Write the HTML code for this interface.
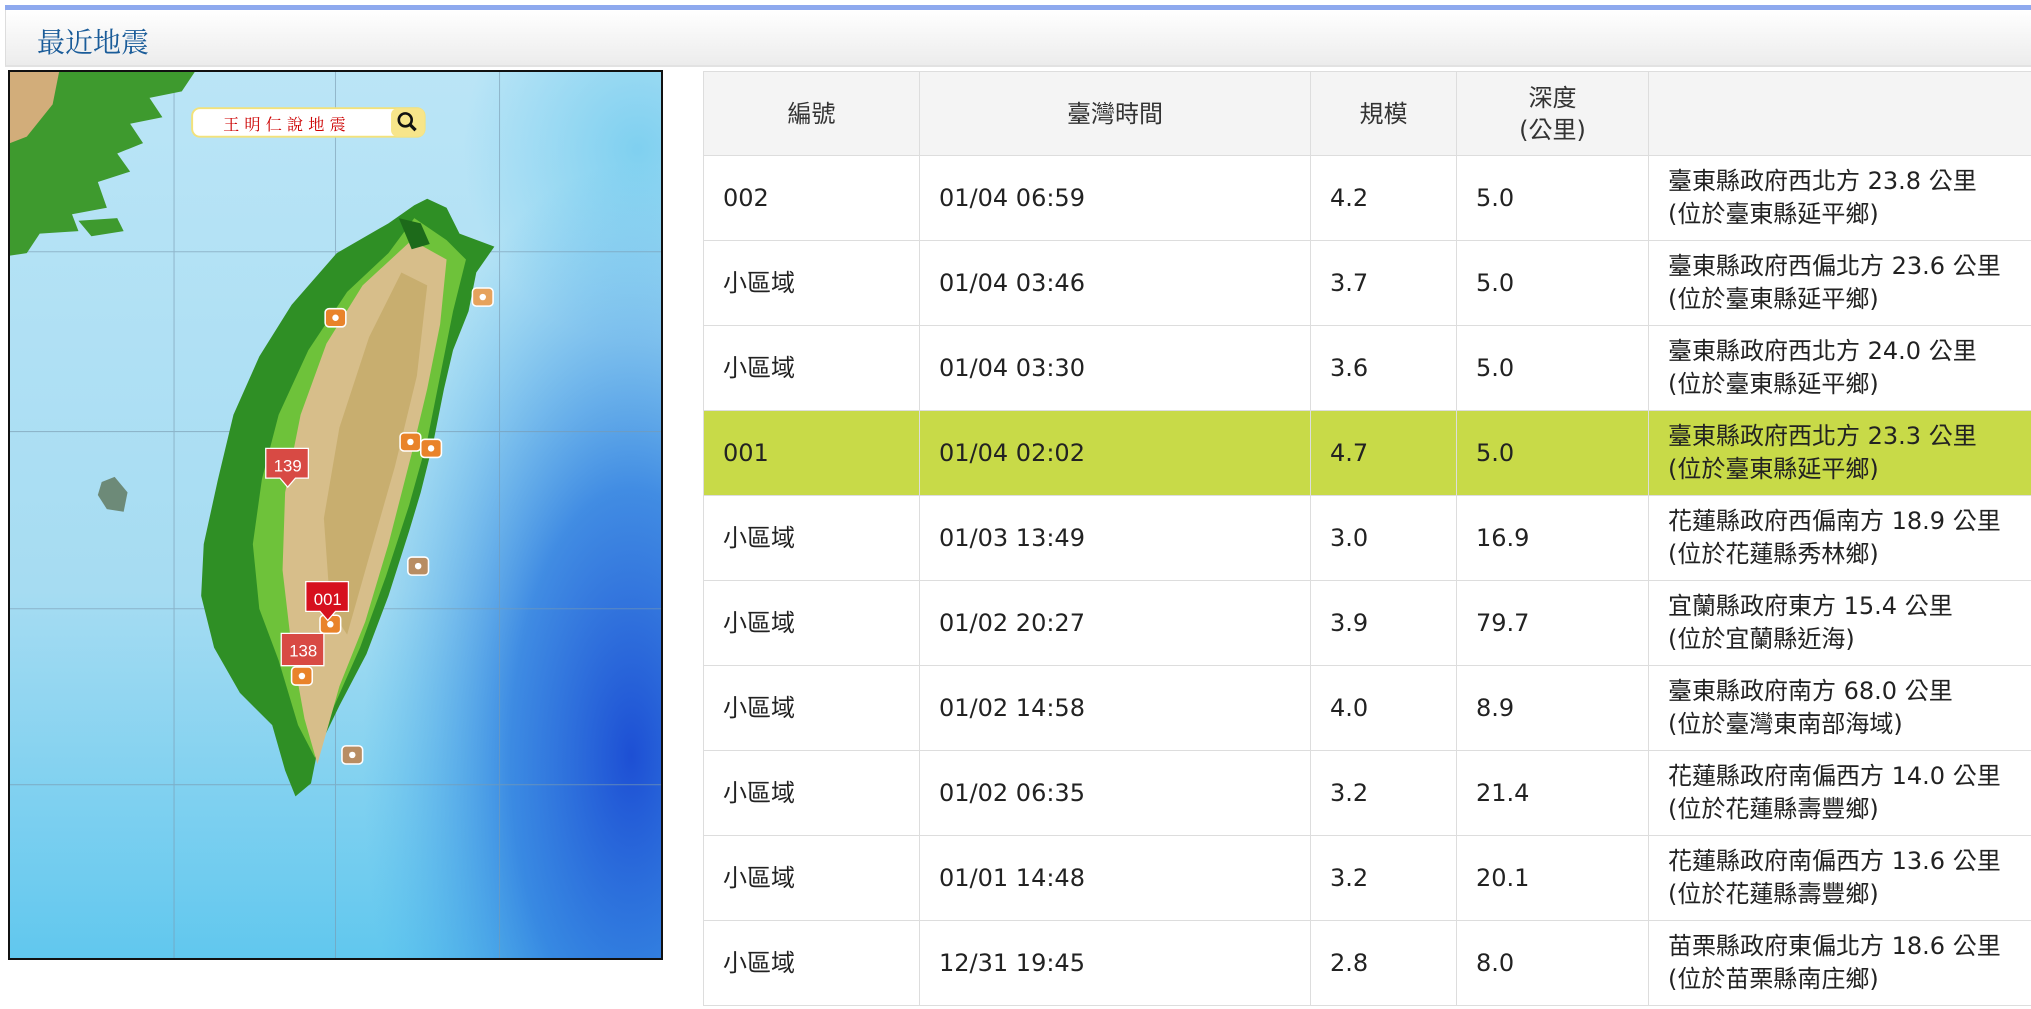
<!DOCTYPE html>
<html><head><meta charset="utf-8"><style>
html,body{margin:0;padding:0;background:#fff;width:2031px;height:1009px;overflow:hidden;font-family:"DejaVu Sans","Noto Sans CJK TC",sans-serif;}
.topbar{position:absolute;left:5px;top:5px;width:2026px;height:5px;background:#8ea9ee;}
.head{position:absolute;left:5px;top:10px;width:2026px;height:55px;background:linear-gradient(#fff,#ececec);border-bottom:2px solid #e2e2e2;border-left:1px solid #ddd;}
.head span{position:absolute;left:31px;top:11px;font-family:"Liberation Serif","Noto Serif CJK SC",serif;font-size:28px;color:#1a5c99;}
.map{position:absolute;left:8px;top:70px;width:655px;height:890px;border:2px solid #111;box-sizing:border-box;overflow:hidden;}
table{position:absolute;left:703px;top:71px;border-collapse:collapse;font-size:24px;color:#222;table-layout:fixed;width:1500px;}
td,th{border:1px solid #ddd;box-sizing:border-box;padding:0 0 0 19px;text-align:left;font-weight:normal;white-space:nowrap;overflow:hidden;}
th{background:#f4f4f4;height:84px;text-align:center;padding:0;color:#333;line-height:32px;}
td{height:85px;line-height:33px;}
tr.hl td{background:#c8da48;}
</style></head><body>
<div class="topbar"></div>
<div class="head"><span>最近地震</span></div>
<div class="map">
<svg width="651" height="886" viewBox="7 55 504 685" preserveAspectRatio="none" xmlns="http://www.w3.org/2000/svg">
<defs>
<linearGradient id="sea" x1="0" y1="0" x2="0" y2="1">
<stop offset="0" stop-color="#bde6f7"/><stop offset="0.6" stop-color="#a6dcf2"/><stop offset="1" stop-color="#5cc6ee"/></linearGradient>
<radialGradient id="deep" cx="0.9" cy="0.75" r="0.65"><stop offset="0" stop-color="#1d4fd4"/><stop offset="0.45" stop-color="#2f7ee0" stop-opacity="0.85"/><stop offset="1" stop-color="#4fb3ea" stop-opacity="0"/></radialGradient>
<radialGradient id="ne" cx="0.9" cy="0.2" r="0.5"><stop offset="0" stop-color="#7fd0f0"/><stop offset="1" stop-color="#7fd0f0" stop-opacity="0"/></radialGradient>
</defs>
<rect x="0" y="0" width="520" height="760" fill="url(#sea)"/>
<rect x="250" y="55" width="270" height="300" fill="url(#ne)"/>
<rect x="200" y="55" width="320" height="705" fill="url(#deep)"/>
<g stroke="#7a9ab0" stroke-width="0.8" opacity="0.6">
<line x1="134" y1="55" x2="134" y2="740"/><line x1="259" y1="55" x2="259" y2="740"/><line x1="386" y1="55" x2="386" y2="740"/>
<line x1="7" y1="194" x2="511" y2="194"/><line x1="7" y1="333" x2="511" y2="333"/><line x1="7" y1="470" x2="511" y2="470"/><line x1="7" y1="606" x2="511" y2="606"/></g>
<path d="M7 55 L150 55 L140 70 L115 75 L125 90 L100 95 L110 110 L90 118 L100 132 L75 140 L82 160 L55 165 L60 178 L30 180 L20 195 L7 197 Z" fill="#3e9a2e"/>
<path d="M60 170 L90 168 L95 178 L70 182Z" fill="#3e9a2e"/>
<path d="M7 55 L45 55 L40 80 L20 105 L7 110Z" fill="#d2ad7a"/>
<path d="M78 372 L88 368 L98 380 L95 395 L82 393 L75 382Z" fill="#6d8a78"/>
<path d="M330 153 L345 160 L355 180 L382 190 L368 210 L362 240 L350 270 L343 300 L335 340 L325 380 L316 410 L300 460 L283 505 L262 545 L245 580 L240 605 L228 615 L220 595 L210 560 L185 535 L165 500 L155 460 L157 420 L168 370 L180 320 L200 275 L225 235 L260 195 L300 172 L320 158Z" fill="#2f8f25"/>
<path d="M320 168 L345 185 L360 200 L350 240 L340 290 L330 340 L316 390 L298 445 L278 500 L258 545 L243 585 L230 560 L215 510 L200 470 L195 420 L202 370 L215 320 L238 270 L268 225 L300 195Z" fill="#6ec23a"/>
<path d="M318 185 L345 200 L340 250 L330 300 L318 350 L300 420 L282 480 L262 530 L245 590 L235 555 L225 500 L218 440 L220 380 L232 320 L252 265 L280 220Z" fill="#d7be8a"/>
<path d="M310 210 L330 220 L322 290 L305 360 L285 430 L268 490 L255 470 L250 400 L262 330 L285 260Z" fill="#c4aa68" opacity="0.8"/>
<path d="M308 168 L325 172 L332 188 L318 192Z" fill="#1d6a1a"/>
<rect x="148" y="83" width="180" height="22" rx="6" fill="#fff" stroke="#f3e27a" stroke-width="1.5"/>
<rect x="302" y="83" width="26" height="22" rx="5" fill="#f7e58a"/>
<circle cx="313" cy="92" r="5" fill="none" stroke="#111" stroke-width="2"/><line x1="317" y1="96" x2="321" y2="100" stroke="#111" stroke-width="2.5"/>
<text x="172" y="100" font-family="Noto Serif CJK SC,serif" font-size="12.5" fill="#c00" letter-spacing="4">王明仁說地震</text>
<g fill="#e9832a" stroke="#fff" stroke-width="1.2">
<rect x="251" y="238" width="16" height="14" rx="3"/><rect x="365" y="222" width="16" height="14" rx="3" fill="#e6a25c"/>
<rect x="309" y="334" width="16" height="14" rx="3"/><rect x="325" y="339" width="16" height="14" rx="3"/>
<rect x="315" y="430" width="16" height="14" rx="3" fill="#b88d63"/><rect x="264" y="576" width="16" height="14" rx="3" fill="#b88d63"/>
<rect x="225" y="515" width="16" height="14" rx="3"/><rect x="247" y="475" width="16" height="14" rx="3"/></g>
<g fill="#fff"><circle cx="259" cy="245" r="2.5"/><circle cx="373" cy="229" r="2.5"/><circle cx="317" cy="341" r="2.5"/><circle cx="333" cy="346" r="2.5"/><circle cx="323" cy="437" r="2.5"/><circle cx="272" cy="583" r="2.5"/><circle cx="233" cy="522" r="2.5"/><circle cx="255" cy="482" r="2.5"/></g>
<path d="M205 346 h33 v23 h-10 l-6 7 l-6 -7 h-11z" fill="#d84a44" stroke="#fff" stroke-width="1"/>
<text x="222" y="364" font-family="Liberation Sans,sans-serif" font-size="13" fill="#fff" text-anchor="middle">139</text>
<path d="M236 449 h33 v23 h-10 l-6 7 l-6 -7 h-11z" fill="#d6101e" stroke="#fff" stroke-width="1"/>
<text x="253" y="467" font-family="Liberation Sans,sans-serif" font-size="13" fill="#fff" text-anchor="middle">001</text>
<path d="M217 489 h33 v25 h-33z" fill="#d84a44" stroke="#fff" stroke-width="1"/>
<text x="234" y="507" font-family="Liberation Sans,sans-serif" font-size="13" fill="#fff" text-anchor="middle">138</text>
</svg>
</div>
<table>
<colgroup><col style="width:216px"><col style="width:391px"><col style="width:146px"><col style="width:192px"><col style="width:555px"></colgroup>
<tr><th>編號</th><th>臺灣時間</th><th>規模</th><th>深度<br>(公里)</th><th></th></tr>
<tr><td>002</td><td>01/04 06:59</td><td>4.2</td><td>5.0</td><td>臺東縣政府西北方 23.8 公里<br>(位於臺東縣延平鄉)</td></tr>
<tr><td>小區域</td><td>01/04 03:46</td><td>3.7</td><td>5.0</td><td>臺東縣政府西偏北方 23.6 公里<br>(位於臺東縣延平鄉)</td></tr>
<tr><td>小區域</td><td>01/04 03:30</td><td>3.6</td><td>5.0</td><td>臺東縣政府西北方 24.0 公里<br>(位於臺東縣延平鄉)</td></tr>
<tr class="hl"><td>001</td><td>01/04 02:02</td><td>4.7</td><td>5.0</td><td>臺東縣政府西北方 23.3 公里<br>(位於臺東縣延平鄉)</td></tr>
<tr><td>小區域</td><td>01/03 13:49</td><td>3.0</td><td>16.9</td><td>花蓮縣政府西偏南方 18.9 公里<br>(位於花蓮縣秀林鄉)</td></tr>
<tr><td>小區域</td><td>01/02 20:27</td><td>3.9</td><td>79.7</td><td>宜蘭縣政府東方 15.4 公里<br>(位於宜蘭縣近海)</td></tr>
<tr><td>小區域</td><td>01/02 14:58</td><td>4.0</td><td>8.9</td><td>臺東縣政府南方 68.0 公里<br>(位於臺灣東南部海域)</td></tr>
<tr><td>小區域</td><td>01/02 06:35</td><td>3.2</td><td>21.4</td><td>花蓮縣政府南偏西方 14.0 公里<br>(位於花蓮縣壽豐鄉)</td></tr>
<tr><td>小區域</td><td>01/01 14:48</td><td>3.2</td><td>20.1</td><td>花蓮縣政府南偏西方 13.6 公里<br>(位於花蓮縣壽豐鄉)</td></tr>
<tr><td>小區域</td><td>12/31 19:45</td><td>2.8</td><td>8.0</td><td>苗栗縣政府東偏北方 18.6 公里<br>(位於苗栗縣南庄鄉)</td></tr>
</table>
</body></html>
